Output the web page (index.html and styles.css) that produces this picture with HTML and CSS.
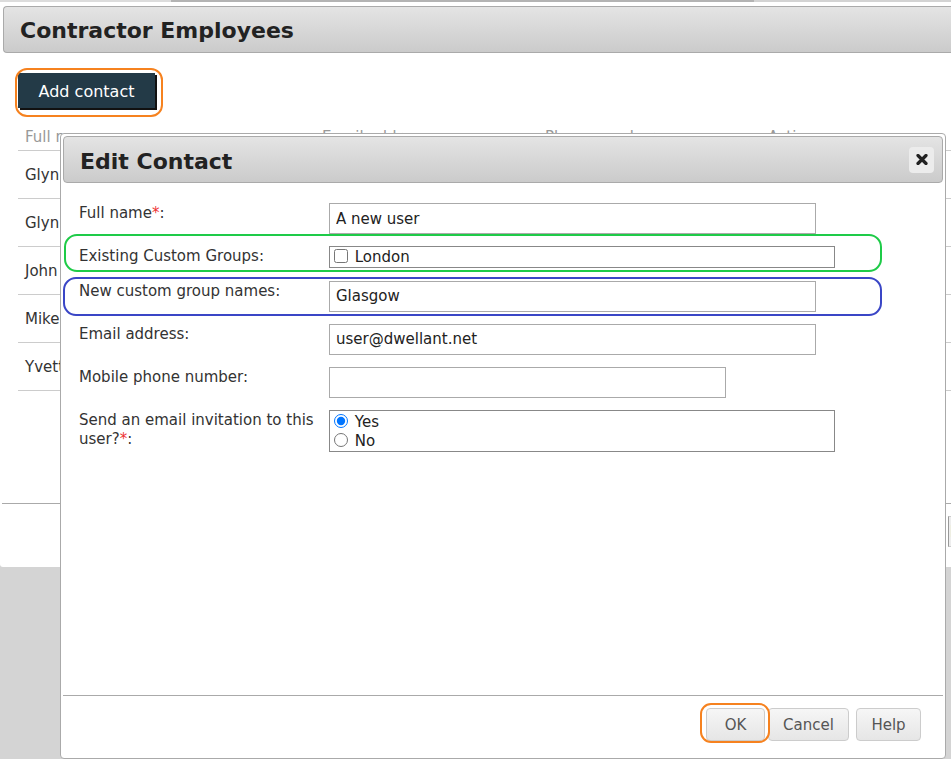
FILE: index.html
```html
<!DOCTYPE html>
<html lang="en">
<head>
  <meta charset="UTF-8">
  <meta name="viewport" content="width=device-width, initial-scale=1.0">
  <title>Contractor Employees</title>
  <link rel="stylesheet" href="styles.css">
</head>
<body>

  <div class="panel">
    <div class="tabstrip"><span class="tab-a"></span><span class="tab-b"></span><span class="tab-c"></span></div>
    <div class="panel-head">
      <h1>Contractor Employees</h1>
    </div>
    <div class="toolbar">
      <span class="btn-wrap">
        <button class="btn-dark" type="button">Add contact</button>
        <span class="ring ring-add"></span>
      </span>
    </div>
    <table class="contacts">
      <thead>
        <tr><th>Full name</th><th>Email address</th><th>Phone number</th><th>Actions</th></tr>
      </thead>
      <tbody>
        <tr><td>Glyn Davies</td><td>glyn@dwellant.net</td><td></td><td></td></tr>
        <tr><td>Glyn Jones</td><td>gjones@dwellant.net</td><td></td><td></td></tr>
        <tr><td>John Smith</td><td>john@dwellant.net</td><td></td><td></td></tr>
        <tr><td>Mike Brown</td><td>mike@dwellant.net</td><td></td><td></td></tr>
        <tr><td>Yvette Hall</td><td>yvette@dwellant.net</td><td></td><td></td></tr>
      </tbody>
    </table>
    <div class="pager">
      <button class="pager-btn" type="button">Next</button>
    </div>
  </div>

  <div class="modal">
    <div class="modal-title">
      <h2>Edit Contact</h2>
      <button class="close" type="button" aria-label="Close">
        <svg width="12" height="11" viewBox="0 0 12 11"><path d="M2 1.5 L10 9.5 M10 1.5 L2 9.5" stroke="#222" stroke-width="3.2" stroke-linecap="round"/></svg>
      </button>
    </div>
    <form class="modal-body" id="contact-form">
      <div class="row">
        <label class="lbl" for="full-name">Full name<span class="req">*</span>:</label>
        <input class="field" type="text" id="full-name" value="A new user">
      </div>
      <div class="row">
        <label class="lbl">Existing Custom Groups:</label>
        <div class="choices">
          <label class="choice"><input type="checkbox"> London</label>
        </div>
        <span class="ring ring-green"></span>
      </div>
      <div class="row">
        <label class="lbl" for="new-groups">New custom group names:</label>
        <input class="field" type="text" id="new-groups" value="Glasgow">
        <span class="ring ring-blue"></span>
      </div>
      <div class="row">
        <label class="lbl" for="email">Email address:</label>
        <input class="field" type="text" id="email" value="user@dwellant.net">
      </div>
      <div class="row">
        <label class="lbl" for="mobile">Mobile phone number:</label>
        <input class="field short" type="text" id="mobile" value="">
      </div>
      <div class="row">
        <label class="lbl">Send an email invitation to this user?<span class="req">*</span>:</label>
        <div class="choices radios">
          <label class="choice"><input type="radio" name="invite" checked> Yes</label>
          <label class="choice"><input type="radio" name="invite"> No</label>
        </div>
      </div>
    </form>
    <div class="modal-foot">
      <span class="btn-wrap">
        <button class="btn btn-ok" type="submit" form="contact-form">OK</button>
        <span class="ring ring-ok"></span>
      </span>
      <button class="btn btn-cancel" type="button">Cancel</button>
      <button class="btn btn-help" type="button">Help</button>
    </div>
  </div>

</body>
</html>
```

FILE: styles.css
```css
html {
  overflow: hidden;
}

body {
  margin: 0;
  height: 759px;
  overflow: hidden;
  background-color: #d4d4d4;
  font-family: "DejaVu Sans", Verdana, sans-serif;
  font-size: 15px;
  color: #333;
}

/* page panel behind the dialog */
.panel {
  width: 1010px;
  height: 567px;
  display: flex;
  flex-direction: column;
  background: #fff;
  border-bottom-left-radius: 3px;
}

.tabstrip {
  display: flex;
  height: 2px;
}

.tab-a {
  width: 171px;
  background: #dcdcdc;
}

.tab-b {
  width: 583px;
  background: #b3b3b3;
}

.tab-c {
  flex: 1;
  background: #d3d3d3;
}

.panel-head {
  margin: 4px 0 0 3px;
  height: 47px;
  box-sizing: border-box;
  display: flex;
  align-items: center;
  padding-left: 16px;
  border: 1px solid #aaa;
  border-right: 0;
  border-radius: 4px 0 0 4px;
  background: linear-gradient(#e4e4e4, #cbcbcb);
}

.panel-head h1 {
  margin: 0;
  padding-top: 2px;
  font-size: 22px;
  color: #222;
}

.toolbar {
  padding: 20px 0 0 18px;
}

.btn-wrap {
  position: relative;
  display: inline-block;
}

.btn-dark {
  display: block;
  width: 137px;
  height: 35px;
  padding: 1px 0 0;
  border: 0;
  background: #233a47;
  color: #fff;
  font-family: "DejaVu Sans", Verdana, sans-serif;
  font-size: 16px;
  box-shadow: 2px 2px 0 #111;
}

/* hand-drawn highlight rings */
.ring {
  position: absolute;
  box-sizing: border-box;
  border: 2px solid;
  border-radius: 13px;
  pointer-events: none;
}

.ring-add {
  left: -3px;
  top: -5px;
  width: 148px;
  height: 49px;
  border-color: #f6821f;
  border-radius: 12px;
}

.ring-green {
  left: -15px;
  top: -12px;
  width: 818px;
  height: 38px;
  border-color: #1ecb48;
}

.ring-blue {
  left: -16px;
  top: -4px;
  width: 819px;
  height: 39px;
  border-color: #3a46c6;
}

.ring-ok {
  left: -6px;
  top: -5px;
  width: 70px;
  height: 40px;
  border-color: #f6821f;
  border-radius: 11px;
}

.contacts {
  margin: 19px 0 0 18px;
  width: 990px;
  border-collapse: collapse;
  table-layout: fixed;
}

.contacts th {
  padding: 1px 7px 3px;
  line-height: 19px;
  text-align: left;
  font-weight: normal;
  color: #999;
  border-bottom: 1px solid #ccc;
}

.contacts th:nth-child(1) { width: 283px; }
.contacts th:nth-child(2) { width: 209px; }
.contacts th:nth-child(3) { width: 209px; }

.contacts td {
  height: 47px;
  padding: 0 7px;
  border-bottom: 1px solid #ccc;
  white-space: nowrap;
  overflow: hidden;
}

.pager {
  margin: auto 0 0 2px;
  height: 64px;
  box-sizing: border-box;
  padding-top: 12px;
  display: flex;
  justify-content: flex-end;
  border-top: 1px solid #aaa;
}

.pager-btn {
  width: 62px;
  height: 31px;
  padding: 0 0 0 1px;
  text-align: left;
  border: 1px solid #ccc;
  border-left: 1px solid #999;
  background: #eee;
  color: #333;
  font-family: "DejaVu Sans", Verdana, sans-serif;
  font-size: 15px;
}

/* dialog */
.modal {
  position: absolute;
  left: 60px;
  top: 133px;
  width: 886px;
  height: 626px;
  box-sizing: border-box;
  padding: 2px;
  display: flex;
  flex-direction: column;
  background: #fff;
  border: 1px solid #aaa;
  border-radius: 4px;
}

.modal-title {
  height: 47px;
  box-sizing: border-box;
  display: flex;
  align-items: center;
  justify-content: space-between;
  padding: 0 8px 0 16px;
  border: 1px solid #aaa;
  border-radius: 4px;
  background: linear-gradient(#e4e4e4, #cbcbcb);
}

.modal-title h2 {
  margin: 0;
  padding-top: 3px;
  font-size: 22px;
  color: #222;
}

.close {
  width: 25px;
  height: 26px;
  padding: 0;
  display: flex;
  align-items: center;
  justify-content: center;
  border: 0;
  border-radius: 4px;
  background: #ececec;
}

.modal-body {
  flex: 1;
  margin: 0;
  padding: 20px 0 0 16px;
  display: flex;
  flex-direction: column;
  gap: 12px;
}

.row {
  position: relative;
  display: flex;
  align-items: flex-start;
}

.row + .row {
  margin-top: 0.25px;
}

.lbl {
  width: 250px;
  flex: none;
  box-sizing: border-box;
  padding: 1px 5px 0 0;
  line-height: 19px;
  color: #333;
}

.req {
  color: #e33;
}

.field {
  width: 487px;
  height: 31px;
  box-sizing: border-box;
  margin: 0;
  padding: 0 6px;
  border: 1px solid #aaa;
  border-radius: 0;
  font-family: "DejaVu Sans", Verdana, sans-serif;
  font-size: 15px;
  color: #222;
}

.field.short {
  width: 397px;
}

.choices {
  width: 506px;
  box-sizing: border-box;
  padding-top: 1px;
  border: 1px solid #888;
  line-height: 19px;
  color: #222;
}

.choices.radios {
  padding-top: 2px;
}

.choice {
  display: block;
}

.choice input {
  width: 14px;
  height: 14px;
  margin: 0 2px 0 4px;
  vertical-align: -1px;
}

.modal-foot {
  height: 61px;
  box-sizing: border-box;
  padding: 12px 22px 0 0;
  display: flex;
  justify-content: flex-end;
  align-items: flex-start;
  border-top: 1px solid #aaa;
}

.btn {
  height: 33px;
  padding: 0;
  border: 1px solid #ccc;
  border-radius: 4px;
  background: linear-gradient(#f6f6f6, #e6e6e6);
  color: #555;
  font-family: "DejaVu Sans", Verdana, sans-serif;
  font-size: 15px;
  cursor: pointer;
}

.btn-ok {
  display: block;
  width: 59px;
}

.btn-cancel {
  width: 81px;
  margin-left: 3px;
}

.btn-help {
  width: 65px;
  margin-left: 7px;
}
```
